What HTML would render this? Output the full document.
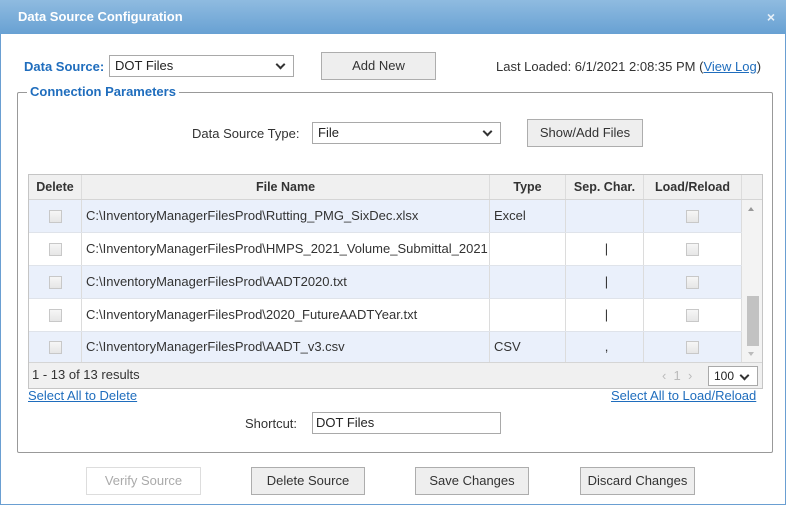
<!DOCTYPE html>
<html><head><style>
*{box-sizing:border-box;margin:0;padding:0}
body{width:789px;height:505px;background:#fff;font-family:"Liberation Sans",sans-serif;font-size:13px;color:#333;position:relative;overflow:hidden}
.a{position:absolute}
.dlg{left:0;top:0;width:786px;height:505px;border:1px solid #6a9fd2;border-top:none}
.title{left:0;top:0;width:786px;height:34px;background:linear-gradient(#8fbbe0,#68a1d3);color:#fff;font-weight:bold;font-size:13px;line-height:34px;padding-left:18px}
.x{right:14px;top:0;line-height:34px;color:#e8f0f8;font-weight:bold;font-size:14px}
.btn{background:#eee;border:1px solid #adadad;text-align:center;color:#333;font-size:13px}
.sel{border:1px solid #a9a9a9;background:#fff;padding-left:5px;font-size:13px;color:#222}
.dd:after{content:"";position:absolute;right:9px;top:5px;width:5px;height:5px;border-right:2px solid #333;border-bottom:2px solid #333;transform:rotate(45deg)}
.lbl{color:#1f6dbd;font-weight:bold}
a{color:#1f6dbd;text-decoration:underline}
.cb{width:13px;height:13px;border:1px solid #c8c8c8;background:linear-gradient(#f6f6f6,#e6e6e6)}
.row{left:29px;width:713px;height:33px;border-bottom:1px solid #dfe3ea}
.c{position:absolute;top:0;height:100%;border-right:1px solid #dcdcdc;line-height:32px;padding-left:4px;white-space:nowrap;overflow:hidden}
</style></head><body>
<div class="a dlg"></div>
<div class="a title">Data Source Configuration</div>
<div class="a x">×</div>

<div class="a lbl" style="left:24px;top:59px">Data Source:</div>
<div class="a sel dd" style="left:109px;top:55px;width:185px;height:22px;line-height:20px">DOT Files</div>
<div class="a btn" style="left:321px;top:52px;width:115px;height:28px;line-height:26px">Add New</div>
<div class="a" style="left:496px;top:59px;color:#333">Last Loaded: 6/1/2021 2:08:35 PM (<a>View Log</a>)</div>

<div class="a" style="left:17px;top:92px;width:756px;height:361px;border:1px solid #999;border-radius:2px"></div>
<div class="a lbl" style="left:27px;top:84px;background:#fff;padding:0 3px">Connection Parameters</div>

<div class="a" style="left:192px;top:126px">Data Source Type:</div>
<div class="a sel dd" style="left:312px;top:122px;width:189px;height:22px;line-height:20px">File</div>
<div class="a btn" style="left:527px;top:119px;width:116px;height:28px;line-height:26px">Show/Add Files</div>

<div class="a" style="left:28px;top:174px;width:735px;height:215px;border:1px solid #c5c5c5;background:#fff"></div>
<div class="a" style="left:29px;top:175px;width:733px;height:25px;background:#f0f0f0;border-bottom:1px solid #d5d5d5;font-weight:bold;color:#333;font-size:12.5px">
<div class="c" style="left:0;width:53px;line-height:25px;text-align:center;padding:0">Delete</div>
<div class="c" style="left:53px;width:408px;line-height:25px;text-align:center;padding:0">File Name</div>
<div class="c" style="left:461px;width:76px;line-height:25px;text-align:center;padding:0">Type</div>
<div class="c" style="left:537px;width:78px;line-height:25px;text-align:center;padding:0">Sep. Char.</div>
<div class="c" style="left:615px;width:98px;line-height:25px;text-align:center;padding:0">Load/Reload</div>
</div>

<div class="a row" style="top:200px;background:#eaf0fb">
<div class="c" style="left:0;width:53px"><div class="cb a" style="left:20px;top:10px"></div></div>
<div class="c" style="left:53px;width:408px">C:\InventoryManagerFilesProd\Rutting_PMG_SixDec.xlsx</div>
<div class="c" style="left:461px;width:76px">Excel</div>
<div class="c" style="left:537px;width:78px;text-align:center"></div>
<div class="c" style="left:615px;width:98px"><div class="cb a" style="left:42px;top:10px"></div></div></div>
<div class="a row" style="top:233px;background:#fff">
<div class="c" style="left:0;width:53px"><div class="cb a" style="left:20px;top:10px"></div></div>
<div class="c" style="left:53px;width:408px">C:\InventoryManagerFilesProd\HMPS_2021_Volume_Submittal_2021</div>
<div class="c" style="left:461px;width:76px"></div>
<div class="c" style="left:537px;width:78px;text-align:center">|</div>
<div class="c" style="left:615px;width:98px"><div class="cb a" style="left:42px;top:10px"></div></div></div>
<div class="a row" style="top:266px;background:#eaf0fb">
<div class="c" style="left:0;width:53px"><div class="cb a" style="left:20px;top:10px"></div></div>
<div class="c" style="left:53px;width:408px">C:\InventoryManagerFilesProd\AADT2020.txt</div>
<div class="c" style="left:461px;width:76px"></div>
<div class="c" style="left:537px;width:78px;text-align:center">|</div>
<div class="c" style="left:615px;width:98px"><div class="cb a" style="left:42px;top:10px"></div></div></div>
<div class="a row" style="top:299px;background:#fff">
<div class="c" style="left:0;width:53px"><div class="cb a" style="left:20px;top:10px"></div></div>
<div class="c" style="left:53px;width:408px">C:\InventoryManagerFilesProd\2020_FutureAADTYear.txt</div>
<div class="c" style="left:461px;width:76px"></div>
<div class="c" style="left:537px;width:78px;text-align:center">|</div>
<div class="c" style="left:615px;width:98px"><div class="cb a" style="left:42px;top:10px"></div></div></div>
<div class="a row" style="top:332px;height:30px;background:#eaf0fb;border:none">
<div class="c" style="left:0;width:53px"><div class="cb a" style="left:20px;top:9px"></div></div>
<div class="c" style="left:53px;width:408px;line-height:30px">C:\InventoryManagerFilesProd\AADT_v3.csv</div>
<div class="c" style="left:461px;width:76px;line-height:30px">CSV</div>
<div class="c" style="left:537px;width:78px;text-align:center;line-height:30px">,</div>
<div class="c" style="left:615px;width:98px"><div class="cb a" style="left:42px;top:9px"></div></div></div>

<div class="a" style="left:742px;top:200px;width:20px;height:162px;background:#f3f3f3"></div>
<div class="a" style="left:748px;top:207px;border:3px solid transparent;border-bottom:4px solid #999;border-top:none"></div>
<div class="a" style="left:748px;top:352px;border:3px solid transparent;border-top:4px solid #bbb;border-bottom:none"></div>
<div class="a" style="left:747px;top:296px;width:12px;height:50px;background:#c2c2c2"></div>

<div class="a" style="left:29px;top:362px;width:733px;height:26px;background:#f0f0f0;border-top:1px solid #d5d5d5;line-height:24px;padding-left:3px">1 - 13 of 13 results</div>
<div class="a" style="left:662px;top:368px;color:#bbb;font-size:13px">‹&nbsp; 1 &nbsp;›</div>
<div class="a sel dd" style="left:708px;top:366px;width:50px;height:20px;line-height:18px;font-size:12px">100</div>

<a class="a" style="left:28px;top:388px">Select All to Delete</a>
<a class="a" style="left:611px;top:388px">Select All to Load/Reload</a>

<div class="a" style="left:245px;top:416px">Shortcut:</div>
<div class="a sel" style="left:312px;top:412px;width:189px;height:22px;line-height:20px;padding-left:3px">DOT Files</div>

<div class="a btn" style="left:86px;top:467px;width:115px;height:28px;line-height:26px;background:#fff;border-color:#ddd;color:#aaa">Verify Source</div>
<div class="a btn" style="left:251px;top:467px;width:114px;height:28px;line-height:26px">Delete Source</div>
<div class="a btn" style="left:415px;top:467px;width:114px;height:28px;line-height:26px">Save Changes</div>
<div class="a btn" style="left:580px;top:467px;width:115px;height:28px;line-height:26px">Discard Changes</div>
</body></html>
